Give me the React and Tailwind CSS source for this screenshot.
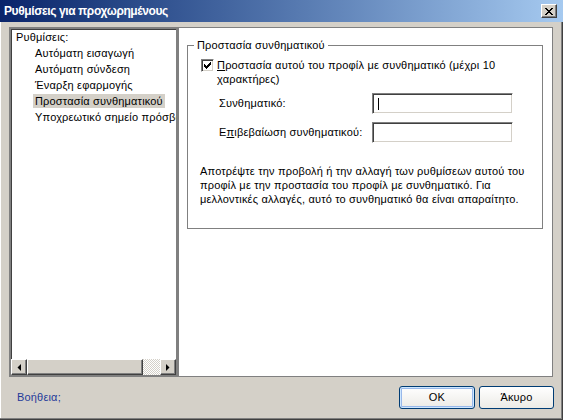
import React from "react";

const font = { fontFamily: '"Liberation Sans", Arial, sans-serif' };

function Raised({ className = "", children }) {
  return (
    <div
      className={
        "bg-[#d4d0c8] border border-t-white border-l-white border-r-[#404040] border-b-[#404040] shadow-[inset_-1px_-1px_0_#808080] flex items-center justify-center " +
        className
      }
    >
      {children}
    </div>
  );
}

function ScrollBar() {
  return (
    <div className="flex h-[16px] shrink-0">
      <Raised className="w-[16px] h-[16px] shrink-0">
        <svg width="4" height="7" viewBox="0 0 4 7">
          <path d="M4 0 L4 7 L0.5 3.5 Z" fill="#000" />
        </svg>
      </Raised>
      <Raised className="w-[116px] h-[16px] shrink-0" />
      <div className="flex-1 h-[16px] bg-[repeating-conic-gradient(#ffffff_0_25%,#d4d0c8_0_50%)] bg-[length:2px_2px]" />
      <Raised className="w-[16px] h-[16px] shrink-0">
        <svg width="4" height="7" viewBox="0 0 4 7">
          <path d="M0 0 L0 7 L3.5 3.5 Z" fill="#000" />
        </svg>
      </Raised>
    </div>
  );
}

function Sunken({ className = "", children }) {
  return (
    <div
      className={
        "relative bg-white border border-t-[#808080] border-l-[#808080] border-r-white border-b-white shadow-[inset_1px_1px_0_#404040,inset_-1px_-1px_0_#d4d0c8] " +
        className
      }
    >
      {children}
    </div>
  );
}

export default function App() {
  const items = [
    "Αυτόματη εισαγωγή",
    "Αυτόματη σύνδεση",
    "Έναρξη εφαρμογής",
    "Προστασία συνθηματικού",
    "Υποχρεωτικό σημείο πρόσβασης",
  ];
  return (
    <div
      style={font}
      className="w-[563px] h-[420px] bg-[#d4d0c8] flex flex-col overflow-hidden text-[11px] tracking-[0.18px] text-black shadow-[inset_-1px_-1px_0_#404040,inset_-2px_-2px_0_#808080,inset_1px_1px_0_#ffffff]"
    >
      {/* Title bar */}
      <div className="h-[22px] shrink-0 flex items-center bg-linear-to-r from-[#0a246a] to-[#a6caf0] pl-[4px] pr-[6px]">
        <div className="flex-1 text-white font-bold text-[12px] tracking-[-0.4px] leading-none">
          Ρυθμίσεις για προχωρημένους
        </div>
        <Raised className="w-[16px] h-[14px]">
          <svg width="8" height="7" viewBox="0 0 8 7" shapeRendering="crispEdges">
            <path
              d="M0 0h2v1h-2zM6 0h2v1h-2zM1 1h2v1h-2zM5 1h2v1h-2zM2 2h4v1h-4zM3 3h2v1h-2zM2 4h4v1h-4zM1 5h2v1h-2zM5 5h2v1h-2zM0 6h2v1h-2zM6 6h2v1h-2z"
              fill="#000"
            />
          </svg>
        </Raised>
      </div>

      {/* Body */}
      <div className="flex mt-[5px] ml-[9px] h-[350px] shrink-0">
        {/* Tree pane */}
        <div className="w-[169px] h-[350px] shrink-0 flex flex-col bg-white border-2 border-[#808080] shadow-[inset_1px_1px_0_#404040]">
          <div className="flex-1 overflow-hidden whitespace-nowrap pl-[5px]">
            <div className="h-[16px] leading-[16px]">Ρυθμίσεις:</div>
            {items.map((t, i) => (
              <div key={t} className="h-[16px] flex items-center pl-[17px]">
                <span
                  className={
                    "h-[14px] leading-[14px] px-[2px] " +
                    (i === 3 ? "bg-[#d4d0c8]" : "")
                  }
                >
                  {t}
                </span>
              </div>
            ))}
          </div>
          <ScrollBar />
        </div>

        {/* Right pane */}
        <div className="w-[375px] h-[350px] shrink-0 bg-white border border-[#808080] pt-[17px] pl-[8px] pr-[9px]">
          <div className="relative border border-[#808080] h-[184px] pt-[13px] pl-[13px]">
            <div className="absolute -top-[8px] left-[6px] bg-white px-[3px] leading-[14px]">
              Προστασία συνθηματικού
            </div>
            {/* checkbox row */}
            <div className="flex items-start gap-[3px]">
              <Sunken className="w-[13px] h-[13px] shrink-0 flex items-center justify-center">
                <svg width="9" height="9" viewBox="0 0 9 9" shapeRendering="crispEdges" className="absolute left-[1px] top-[1px]">
                  <path d="M1 3h1v3h-1zM2 4h1v3h-1zM3 5h1v3h-1zM4 4h1v3h-1zM5 3h1v3h-1zM6 2h1v3h-1zM7 1h1v3h-1z" fill="#000" />
                </svg>
              </Sunken>
              <div className="leading-[14px] -mt-[1px]">
                <span className="underline">Π</span>ροστασία αυτού του προφίλ με συνθηματικό (μέχρι 10
                <br />
                χαρακτήρες)
              </div>
            </div>
            {/* fields */}
            <div className="mt-[7px] ml-[18px] flex flex-col gap-[8px]">
              <div className="flex items-center">
                <div className="w-[153px]">Συνθηματικό:</div>
                <Sunken className="w-[141px] h-[21px]">
                  <div className="absolute left-[5px] top-[4px] w-[1px] h-[12px] bg-black" />
                </Sunken>
              </div>
              <div className="flex items-center">
                <div className="w-[153px]">
                  Ε<span className="underline">π</span>ιβεβαίωση συνθηματικού:
                </div>
                <Sunken className="w-[141px] h-[21px]" />
              </div>
            </div>
            <div className="mt-[21px] -ml-[1px] leading-[14px]">
              Αποτρέψτε την προβολή ή την αλλαγή των ρυθμίσεων αυτού του
              <br />
              προφίλ με την προστασία του προφίλ με συνθηματικό. Για
              <br />
              μελλοντικές αλλαγές, αυτό το συνθηματικό θα είναι απαραίτητο.
            </div>
          </div>
        </div>
      </div>

      {/* Bottom row */}
      <div className="flex items-center h-[23px] mt-[9px] pl-[17px] pr-[9px]">
        <div className="flex-1 text-[#1f3a9a]">Βοήθεια;</div>
        <button className="w-[76px] h-[23px] rounded-[3px] border border-[#003c74] bg-linear-to-b from-white to-[#ecebe6] shadow-[inset_0_0_0_1px_#cee7ff,inset_0_0_0_2px_#98b8ea] text-[11px]">
          OK
        </button>
        <button className="w-[75px] h-[23px] ml-[4px] rounded-[3px] border border-[#003c74] bg-linear-to-b from-white to-[#ecebe6] text-[11px]">
          Άκυρο
        </button>
      </div>
    </div>
  );
}
